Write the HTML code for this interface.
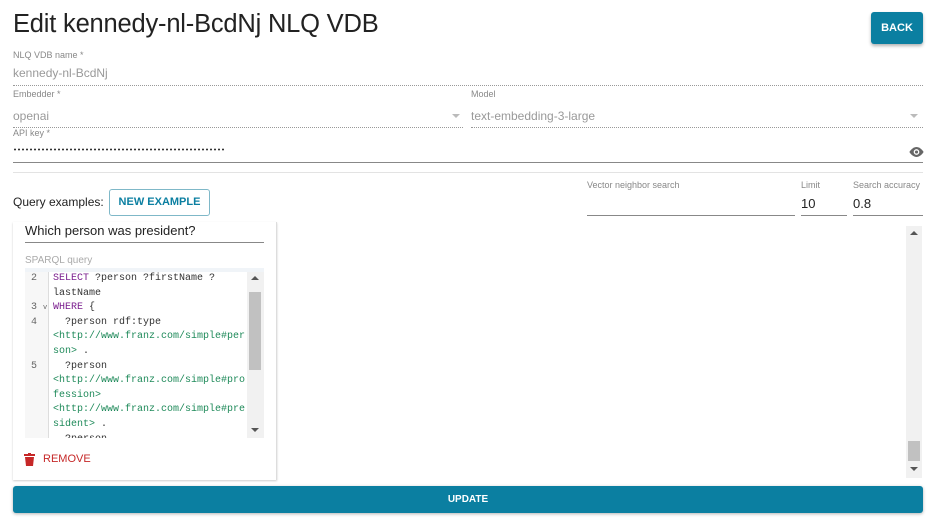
<!DOCTYPE html>
<html><head><style>
*{margin:0;padding:0;box-sizing:border-box}
body{width:934px;height:525px;background:#fff;font-family:"Liberation Sans",sans-serif;position:relative;overflow:hidden;color:#222}
.a{position:absolute}
.lbl{font-size:9px;color:#888}
.dot{border-bottom:1px dotted #999}
.mono{font-family:"Liberation Mono",monospace;font-size:10px;line-height:14.6px;white-space:pre}
.kw{color:#7a1d8e}.u{color:#1f8a5a}
</style></head><body>
<div class="a" style="left:13px;top:10px;font-size:25.5px;color:#222;letter-spacing:-0.2px">Edit kennedy-nl-BcdNj NLQ VDB</div>
<div class="a" style="left:871px;top:12px;width:52px;height:32px;background:#0b7fa1;border-radius:3px;color:#fff;font-size:11px;font-weight:bold;text-align:center;line-height:32px;box-shadow:0 2px 3px rgba(0,0,0,.3)">BACK</div>

<div class="a lbl" style="left:13px;top:50px">NLQ VDB name *</div>
<div class="a" style="left:13px;top:66px;font-size:12px;color:#999">kennedy-nl-BcdNj</div>
<div class="a dot" style="left:13px;top:85px;width:910px"></div>

<div class="a lbl" style="left:13px;top:89px">Embedder *</div>
<div class="a" style="left:13px;top:109px;font-size:12px;color:#999">openai</div>
<div class="a" style="left:452px;top:114px;border:4px solid transparent;border-top-color:#bbb"></div>
<div class="a dot" style="left:13px;top:127px;width:450px"></div>
<div class="a lbl" style="left:471px;top:89px">Model</div>
<div class="a" style="left:471px;top:109px;font-size:12px;color:#999">text-embedding-3-large</div>
<div class="a" style="left:910px;top:114px;border:4px solid transparent;border-top-color:#bbb"></div>
<div class="a dot" style="left:471px;top:127px;width:452px"></div>

<div class="a lbl" style="left:13px;top:128px">API key *</div>
<div class="a" style="left:13px;top:148px;width:212px;height:3px;background-image:radial-gradient(circle,#333 0.9px,transparent 1.1px);background-size:4px 3px"></div>
<svg class="a" style="left:908px;top:145px" width="17" height="14" viewBox="0 0 24 18"><path d="M12 2C6 2 2 9 2 9s4 7 10 7 10-7 10-7-4-7-10-7z" fill="#666"/><circle cx="12" cy="9" r="4" fill="#fff"/><circle cx="12" cy="9" r="2.2" fill="#666"/></svg>
<div class="a" style="left:13px;top:162px;width:910px;border-top:1px solid #888"></div>
<div class="a" style="left:13px;top:172px;width:910px;border-top:1px solid #e3e3e3"></div>

<div class="a" style="left:13px;top:195px;font-size:12px;color:#222">Query examples:</div>
<div class="a" style="left:109px;top:189px;width:101px;height:27px;border:1px solid #7fb8c8;border-radius:3px;color:#0b7fa1;font-size:11px;font-weight:bold;text-align:center;line-height:25px">NEW EXAMPLE</div>

<div class="a lbl" style="left:587px;top:180px">Vector neighbor search</div>
<div class="a" style="left:587px;top:215px;width:208px;border-top:1px solid #888"></div>
<div class="a lbl" style="left:801px;top:180px">Limit</div>
<div class="a" style="left:801px;top:196px;font-size:13px">10</div>
<div class="a" style="left:801px;top:215px;width:46px;border-top:1px solid #888"></div>
<div class="a lbl" style="left:853px;top:180px">Search accuracy</div>
<div class="a" style="left:853px;top:196px;font-size:13px">0.8</div>
<div class="a" style="left:853px;top:215px;width:70px;border-top:1px solid #888"></div>

<div class="a" style="left:13px;top:222px;width:264px;height:258px;box-shadow:0 1px 2px rgba(0,0,0,.2);border-right:1px solid #ddd"></div>
<div class="a" style="left:25px;top:223px;font-size:13px;color:#222">Which person was president?</div>
<div class="a" style="left:25px;top:242px;width:239px;border-top:1px solid #888"></div>
<div class="a lbl" style="left:25px;top:255px;font-size:10px;color:#aaa">SPARQL query</div>
<div class="a" style="left:25px;top:268px;width:239px;height:4px;background:#f0f4f8"></div>
<div class="a" style="left:25px;top:272px;width:24px;height:166px;background:#f7f7f7;border-right:1px solid #ddd"></div>
<div class="a mono" style="left:25px;top:272px;width:239px;height:166px;overflow:hidden;color:#333"><div style="position:absolute;left:6px;top:0;color:#666">2

3 <span style="font-size:7px">v</span>
4


5</div><div style="position:absolute;left:28px;top:0"><span class="kw">SELECT</span> ?person ?firstName ?
lastName
<span class="kw">WHERE</span> {
  ?person rdf:type
<span class="u">&lt;http://www.franz.com/simple#per
son&gt;</span> .
  ?person
<span class="u">&lt;http://www.franz.com/simple#pro
fession&gt;</span>
<span class="u">&lt;http://www.franz.com/simple#pre
sident&gt;</span> .
  ?person</div>
<div style="position:absolute;left:222px;top:0;width:17px;height:166px;background:#f1f1f1"></div>
<div style="position:absolute;left:224px;top:20px;width:12px;height:78px;background:#c1c1c1"></div>
<div style="position:absolute;left:226px;top:4px;border:4px solid transparent;border-bottom-color:#555;border-top:0"></div>
<div style="position:absolute;left:226px;top:156px;border:4px solid transparent;border-top-color:#555;border-bottom:0"></div>
</div>
<svg class="a" style="left:24px;top:453px" width="11" height="13" viewBox="0 0 11 13"><rect x="0" y="1" width="11" height="2" fill="#c62828"/><rect x="4" y="0" width="3" height="2" fill="#c62828"/><path d="M1 4h9l-1 9H2z" fill="#c62828"/></svg>
<div class="a" style="left:43px;top:453px;font-size:11px;color:#c62828">REMOVE</div>

<div class="a" style="left:906px;top:226px;width:16px;height:252px;background:#f1f1f1"></div>
<div class="a" style="left:908px;top:441px;width:12px;height:20px;background:#c1c1c1"></div>
<div class="a" style="left:910px;top:231px;border:4px solid transparent;border-bottom-color:#555;border-top:0"></div>
<div class="a" style="left:910px;top:467px;border:4px solid transparent;border-top-color:#555;border-bottom:0"></div>

<div class="a" style="left:13px;top:486px;width:910px;height:27px;background:#0b7fa1;border-radius:3px;color:#fff;font-size:10px;font-weight:bold;text-align:center;line-height:27px;box-shadow:0 1px 3px rgba(0,0,0,.3)">UPDATE</div>
</body></html>
